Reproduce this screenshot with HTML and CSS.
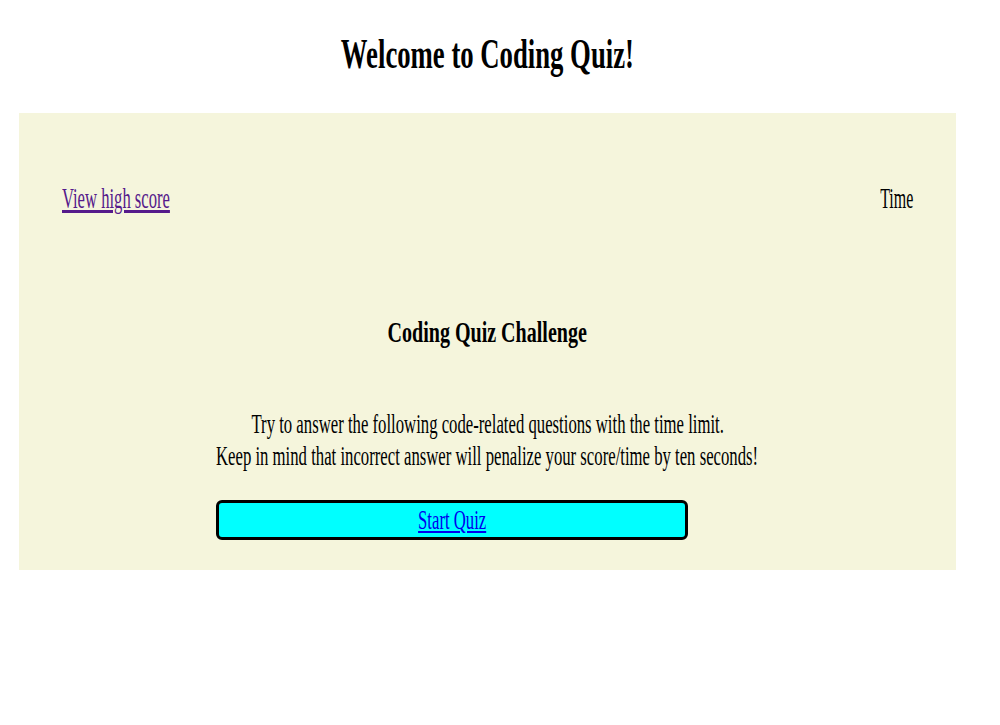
FILE: index.html
```html
<!DOCTYPE html>
<html lang="en">
<head>
<meta charset="utf-8">
<title>Coding Quiz</title>
<link rel="stylesheet" href="styles.css">
</head>
<body>
<div class="page">
  <h1 class="page-title"><span class="sq sq-title">Welcome to Coding Quiz!</span></h1>
  <main class="quiz-box">
    <div class="top-bar">
      <a href="#" class="high-link"><span class="sq sq-left">View high score</span></a>
      <span class="sq sq-right timer">Time</span>
    </div>
    <h2 class="challenge"><span class="sq sq-h2">Coding Quiz Challenge</span></h2>
    <div class="intro">
      <p class="intro-text">
        <span class="sq sq-p">Try to answer the following code-related questions with the time limit.</span>
        <span class="sq sq-p">Keep in mind that incorrect answer will penalize your score/time by ten seconds!</span>
      </p>
      <button class="start-btn" type="button"><a href="#" class="start-link"><span class="sq sq-start">Start Quiz</span></a></button>
    </div>
  </main>
</div>
</body>
</html>
```

FILE: styles.css
```css
html, body {
  margin: 0;
  padding: 0;
  background: #ffffff;
  color: #000000;
  font-family: "Liberation Serif", "Times New Roman", serif;
}

.page {
  width: 975px;
}

.sq {
  display: inline-block;
  white-space: nowrap;
  transform-origin: center center;
}

.sq-title { transform: scaleX(0.636); }
.sq-left { transform: scaleX(0.554); transform-origin: left center; }
.sq-right { transform: scaleX(0.532); transform-origin: right center; }
.sq-h2 { transform: scaleX(0.668); }
.sq-p { transform: scaleX(0.597); }
.sq-start { transform: scaleX(0.618); }

.page-title {
  margin: 29px 0 34px;
  font-size: 42px;
  line-height: 50px;
  font-weight: bold;
  text-align: center;
}

.quiz-box {
  margin: 0 19px;
  background: #f5f5dc;
  padding: 68px 43px 30px;
}

.top-bar {
  display: flex;
  justify-content: space-between;
  font-size: 30px;
  line-height: 34px;
}

.high-link {
  color: #551a8b;
}

.high-link .sq,
.start-link .sq {
  text-decoration: underline;
}

.challenge {
  margin: 100px 0 0;
  font-size: 30px;
  line-height: 34px;
  text-align: center;
}

.intro {
  width: 543px;
  margin: 0 auto;
}

.intro-text {
  display: flex;
  flex-direction: column;
  align-items: center;
  margin: 59px 0 28px;
  font-size: 28px;
  line-height: 32px;
}

.start-btn {
  display: block;
  width: 472px;
  height: 40px;
  padding: 0;
  border: 3px solid #000000;
  border-radius: 6px;
  background: #00ffff;
  font-family: "Liberation Serif", "Times New Roman", serif;
  font-size: 27px;
  line-height: 34px;
  text-align: center;
}

.start-link {
  color: #0000ee;
}
```
